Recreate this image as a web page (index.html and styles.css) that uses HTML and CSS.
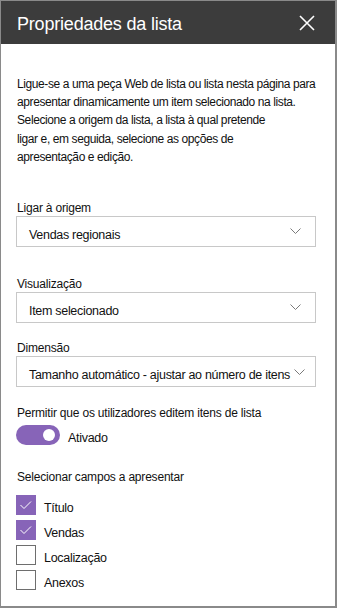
FILE: index.html
```html
<!DOCTYPE html>
<html lang="pt">
<head>
    <meta charset="UTF-8">
    <meta name="viewport" content="width=device-width, initial-scale=1.0">
    <title>Propriedades da lista</title>
    <link rel="stylesheet" href="styles.css">
</head>
<body>
    <div class="panel">
        <div class="panel-header">
            <h2 class="panel-title">Propriedades da lista</h2>
            <button class="close-btn" aria-label="Fechar">
                <svg width="16" height="16" viewBox="0 0 16 16">
                    <path d="M1 1 L15 15 M15 1 L1 15" stroke="#fff" stroke-width="1.6" fill="none"/>
                </svg>
            </button>
        </div>

        <div class="panel-body">
            <p class="intro">Ligue-se a uma peça Web de lista ou lista nesta página para<br>apresentar dinamicamente um item selecionado na lista.<br>Selecione a origem da lista, a lista à qual pretende<br>ligar e, em seguida, selecione as opções de<br>apresentação e edição.</p>

            <div class="field field-source">
                <label class="field-label">Ligar à origem</label>
                <div class="dropdown">
                    <span>Vendas regionais</span>
                    <svg class="chevron" width="11" height="6" viewBox="0 0 11 6"><polyline points="0.5,0.5 5.5,5.5 10.5,0.5" fill="none" stroke="#7a7a7a" stroke-width="1"/></svg>
                </div>
            </div>

            <div class="field field-view">
                <label class="field-label">Visualização</label>
                <div class="dropdown">
                    <span>Item selecionado</span>
                    <svg class="chevron" width="11" height="6" viewBox="0 0 11 6"><polyline points="0.5,0.5 5.5,5.5 10.5,0.5" fill="none" stroke="#7a7a7a" stroke-width="1"/></svg>
                </div>
            </div>

            <div class="field field-size">
                <label class="field-label">Dimensão</label>
                <div class="dropdown">
                    <span>Tamanho automático - ajustar ao número de itens</span>
                    <svg class="chevron" width="11" height="6" viewBox="0 0 11 6"><polyline points="0.5,0.5 5.5,5.5 10.5,0.5" fill="none" stroke="#7a7a7a" stroke-width="1"/></svg>
                </div>
            </div>

            <div class="field field-edit">
                <label class="field-label">Permitir que os utilizadores editem itens de lista</label>
                <div class="toggle-row">
                    <span class="toggle on"><span class="knob"></span></span>
                    <span class="toggle-text">Ativado</span>
                </div>
            </div>

            <div class="field field-columns">
                <label class="field-label">Selecionar campos a apresentar</label>
                <ul class="checklist">
                    <li>
                        <span class="checkbox checked">
                            <svg width="20" height="20" viewBox="0 0 20 20"><polyline points="4.5,10 8,13.5 15,6.5" fill="none" stroke="#fff" stroke-width="1"/></svg>
                        </span>
                        <span>Título</span>
                    </li>
                    <li>
                        <span class="checkbox checked">
                            <svg width="20" height="20" viewBox="0 0 20 20"><polyline points="4.5,10 8,13.5 15,6.5" fill="none" stroke="#fff" stroke-width="1"/></svg>
                        </span>
                        <span>Vendas</span>
                    </li>
                    <li>
                        <span class="checkbox"></span>
                        <span>Localização</span>
                    </li>
                    <li>
                        <span class="checkbox"></span>
                        <span>Anexos</span>
                    </li>
                </ul>
            </div>
        </div>
    </div>
</body>
</html>
```

FILE: styles.css
```css
body {
    margin: 0;
    padding: 0;
    background-color: #fff;
    font-family: "Liberation Sans", Arial, sans-serif;
    color: #111;
}
.panel {
    box-sizing: border-box;
    width: 337px;
    height: 608px;
    border: 1px solid #8a8a8a;
    border-right-width: 2px;
    border-bottom-width: 2px;
    background-color: #fff;
}
.panel-header {
    height: 43px;
    background-color: #3c3c3c;
    display: flex;
    align-items: center;
    justify-content: space-between;
    padding: 0 20px 0 16px;
}
.panel-title {
    margin: 0;
    font-size: 18px;
    font-weight: normal;
    color: #fff;
    padding-top: 4px;
    letter-spacing: -0.2px;
}
.close-btn {
    background: none;
    border: 0;
    padding: 0;
    width: 16px;
    height: 16px;
    margin-top: 1px;
    display: flex;
}
.panel-body {
    padding: 0 19px 0 15px;
}
.intro {
    margin: 31px 0 0 1px;
    font-size: 12px;
    line-height: 18.2px;
    letter-spacing: -0.4px;
    white-space: nowrap;
}
.field-label {
    display: block;
    font-size: 12px;
    line-height: 16px;
    padding: 2px 0 0 1px;
    letter-spacing: -0.2px;
    white-space: nowrap;
}
.field-source { margin-top: 32px; }
.field-view { margin-top: 27px; }
.field-size { margin-top: 15px; }
.field-edit { margin-top: 16px; }
.field-columns { margin-top: 22px; }
.dropdown {
    box-sizing: border-box;
    height: 31px;
    border: 1px solid #c8c8c8;
    display: flex;
    align-items: center;
    justify-content: space-between;
    padding: 6px 14px 0 12px;
    font-size: 12.5px;
    letter-spacing: -0.3px;
}
.dropdown span {
    white-space: nowrap;
}
.field-size .dropdown {
    padding-right: 10px;
}
.chevron {
    flex-shrink: 0;
    margin-top: -7px;
}
.field-size .chevron {
    margin-top: -5px;
}
.toggle-row {
    display: flex;
    align-items: center;
    margin-top: 4px;
    gap: 8px;
}
.toggle {
    position: relative;
    width: 44px;
    height: 20px;
    border-radius: 10px;
    background-color: #8764b8;
}
.toggle .knob {
    position: absolute;
    top: 4px;
    right: 5px;
    width: 12px;
    height: 12px;
    border-radius: 50%;
    background-color: #fff;
}
.toggle-text {
    font-size: 12.5px;
    letter-spacing: -0.3px;
    padding-top: 5px;
}
.checklist {
    list-style: none;
    margin: 10px 0 0 0;
    padding: 0;
    display: flex;
    flex-direction: column;
    gap: 5px;
}
.checklist li {
    display: flex;
    align-items: center;
    gap: 8px;
    font-size: 12.5px;
    letter-spacing: -0.3px;
    height: 20px;
}
.checklist li span:last-child {
    padding-top: 6px;
}
.checkbox {
    box-sizing: border-box;
    width: 20px;
    height: 20px;
    border: 1px solid #6e6e6e;
    background-color: #fff;
    display: flex;
}
.checkbox.checked {
    border-color: #8764b8;
    background-color: #8764b8;
}
.checkbox.checked svg {
    margin: -1px;
}
```
